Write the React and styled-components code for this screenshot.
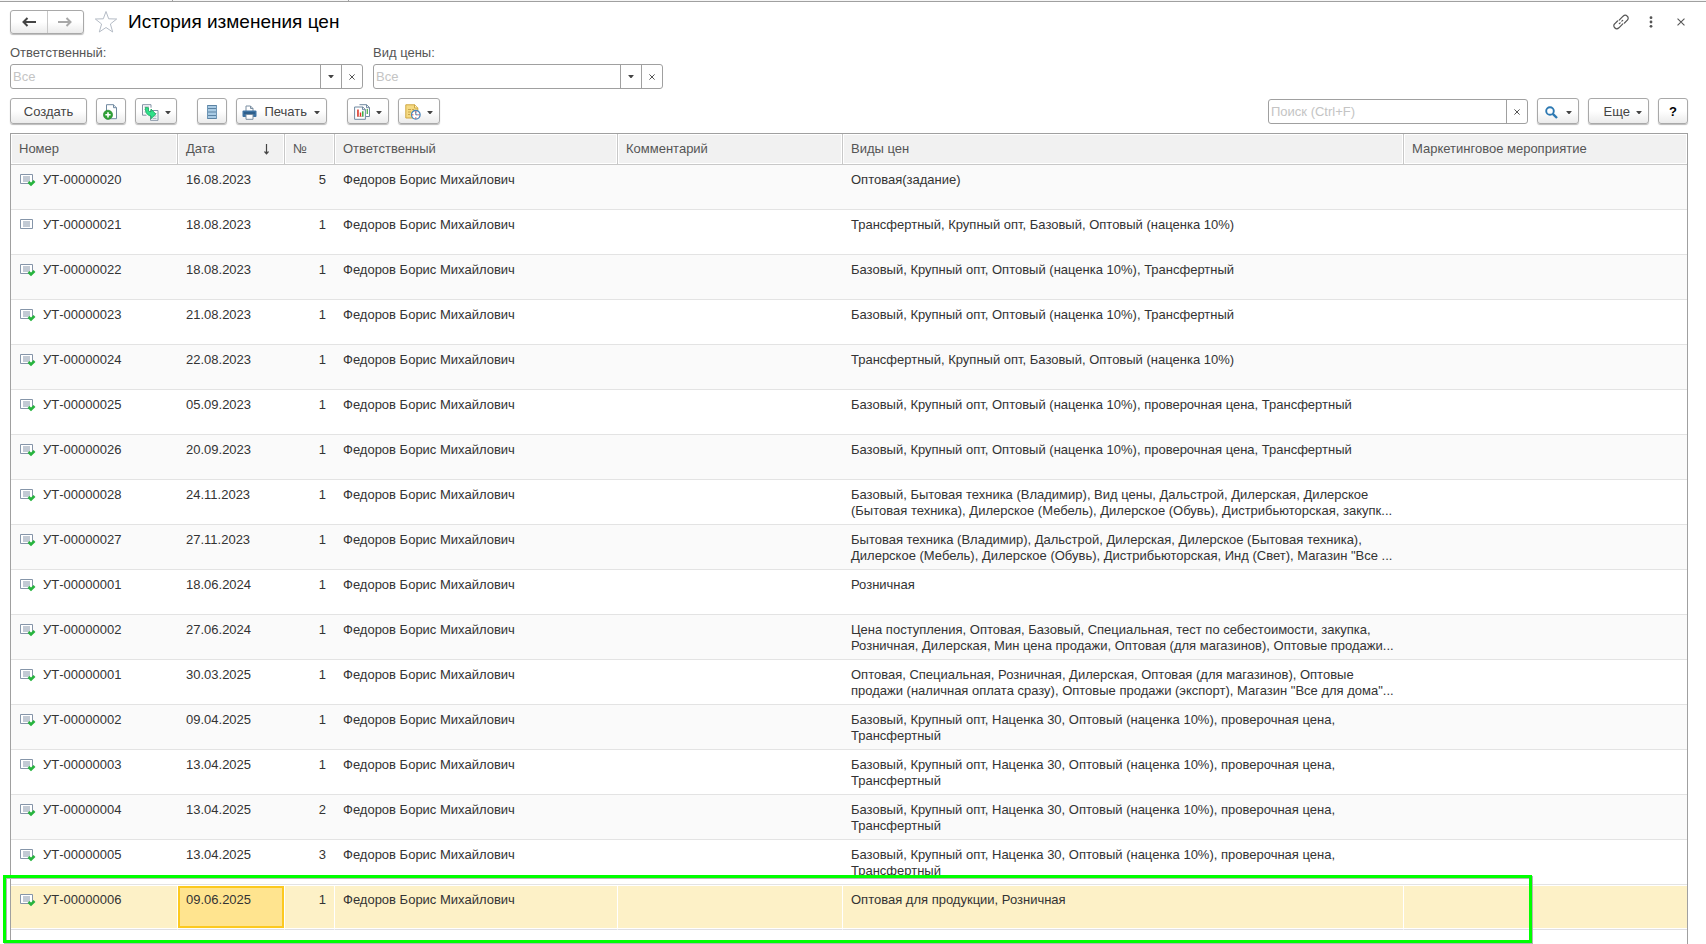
import React from "react";
import styled, { createGlobalStyle, css } from "styled-components";

const GlobalStyle = createGlobalStyle`
  *, *::before, *::after { box-sizing: border-box; }
  body {
    margin: 0;
    background: #fff;
    color: #333;
    font: 13px/16px "Liberation Sans", Arial, sans-serif;
  }
  button, input { font: inherit; color: inherit; }
`;

const Page = styled.div`
  display: flex;
  flex-direction: column;
  height: 100vh;
  overflow: hidden;
`;

const TabStrip = styled.div`
  display: flex;
  flex: none;
  height: 2px;
  background: #f6f6f6;
  border-bottom: 1px solid #a0a0a0;
`;

const TabEdge = styled.div`
  width: ${(p) => p.$width}px;
  border-right: 1px solid #a0a0a0;
`;

const Content = styled.main`
  display: flex;
  flex: 1;
  flex-direction: column;
  min-height: 0;
  padding: 8px 18px 0 10px;
`;

const TitleBar = styled.header`
  display: flex;
  align-items: center;
  height: 24px;
  margin-right: -8px;
`;

const raised = css`
  border: 1px solid #a9a9a9;
  border-radius: 3px;
  background: linear-gradient(#fff 50%, #ebebeb);
  box-shadow: 0 1px 1px #bbb;
`;

const NavGroup = styled.nav`
  ${raised}
  display: flex;
  width: 74px;
  height: 24px;
`;

const NavButton = styled.button`
  display: flex;
  flex: 1;
  align-items: center;
  justify-content: center;
  padding: 0;
  border: 0;
  background: none;
  color: ${(p) => (p.disabled ? "#a8a8a8" : "#444")};
  & + & { border-left: 1px solid #c8c8c8; }
`;

const PlainButton = styled.button`
  display: flex;
  align-items: center;
  justify-content: center;
  width: ${(p) => p.$width || 30}px;
  height: 24px;
  padding: 0;
  border: 0;
  background: none;
  color: #555;
`;

const Title = styled.h1`
  flex: 1;
  margin: 0;
  color: #000;
  font-size: 19px;
  font-weight: 400;
  line-height: 24px;
`;

const Filters = styled.div`
  display: flex;
  gap: 10px;
  margin-top: 11px;
`;

const Filter = styled.div`
  width: ${(p) => p.$width}px;
`;

const Label = styled.label`
  display: block;
  margin-bottom: 3px;
  color: #555;
`;

const Field = styled.div`
  display: flex;
  width: ${(p) => (p.$width ? p.$width + "px" : "100%")};
  height: 25px;
  border: 1px solid #a0a0a0;
  border-radius: 3px;
  background: #fff;
`;

const Input = styled.input`
  flex: 1;
  min-width: 0;
  padding: 0 2px;
  border: 0;
  outline: 0;
  background: none;
  &::placeholder { color: #c4c4c4; opacity: 1; }
`;

const FieldButton = styled.button`
  display: flex;
  align-items: center;
  justify-content: center;
  width: 21px;
  padding: 0;
  border: 0;
  border-left: 1px solid #a0a0a0;
  background: none;
  color: #444;
`;

const Toolbar = styled.div`
  display: flex;
  align-items: flex-end;
  gap: 9px;
  height: 26px;
  margin-top: 9px;
`;

const Group = styled.div`
  display: flex;
  gap: 9px;
  margin-right: ${(p) => (p.$last ? "auto" : "11px")};
`;

const Button = styled.button`
  ${raised}
  display: flex;
  align-items: center;
  justify-content: ${(p) => (p.$end ? "flex-end" : "center")};
  gap: ${(p) => p.$gap || 6}px;
  width: ${(p) => p.$width}px;
  height: 26px;
  padding: ${(p) => (p.$end ? "2px 6px 0 0" : "2px 0 0")};
  color: #444;
`;

const HelpButton = styled(Button)`
  color: #000;
  font-weight: 700;
`;

const TableFrame = styled.div`
  flex: 1;
  min-height: 0;
  margin-top: 9px;
  border: solid #a0a0a0;
  border-width: 1px 1px 0;
`;

const Table = styled.table`
  width: 100%;
  table-layout: fixed;
  border-collapse: separate;
  border-spacing: 0;
`;

const Col = styled.col`
  width: ${(p) => (p.$width ? p.$width + "px" : "auto")};
`;

const HeadCell = styled.th`
  height: 31px;
  padding: 0 8px;
  border-right: 1px solid #c8c8c8;
  border-bottom: 1px solid #c8c8c8;
  background: #f1f1f1;
  box-shadow: inset 0 0 0 1px #fff;
  color: #555;
  font-weight: 400;
  text-align: left;
  white-space: nowrap;
  &:last-child { border-right: 0; }
`;

const HeadContent = styled.div`
  display: flex;
  align-items: center;
  justify-content: space-between;
  padding-right: 6px;
`;

const Cell = styled.td`
  height: 45px;
  padding: 7px ${(p) => (p.$right ? 9 : 8)}px 5px 8px;
  border-bottom: 1px solid #e3e3e3;
  text-align: ${(p) => (p.$right ? "right" : "left")};
  vertical-align: top;
  white-space: nowrap;
`;

const PriceCell = styled(Cell)`
  white-space: pre-line;
`;

const Row = styled.tr`
  background: ${(p) => (p.$even ? "#fafafa" : "#fff")};
  ${(p) =>
    p.$selected &&
    css`
      position: relative;
      background: #fdf1c7;
      ${Cell} {
        border-right: 1px solid #fff;
        box-shadow: inset 0 1px #fff, inset 0 -1px #fff;
        border-bottom-color: #dfdfe3;
      }
      ${Cell}:nth-of-type(3) { padding-right: 8px; }
      ${Cell}:last-of-type { border-right: 0; }
      ${Cell}:nth-of-type(2) {
        background: #ffe48f;
        box-shadow: inset 0 1px #fff, inset 0 -1px #fff, inset 2px 0 #fcc920,
          inset -2px 0 #fcc920, inset 0 3px #fcc920, inset 0 -3px #fcc920;
      }
    `}
`;

const NumberContent = styled.div`
  display: flex;
  gap: 7px;
`;

const Highlight = styled.div`
  position: absolute;
  top: -10px;
  right: 155px;
  left: -8px;
  height: 68px;
  border: 3px solid #00ff00;
  box-shadow: 1px 1px #b4b4b4, inset 1px 1px #b4b4b4;
  pointer-events: none;
`;

const Caret = () => (
  <svg width="6" height="3" viewBox="0 0 6 3" aria-hidden="true">
    <path d="M.5 0h5v.6L3.500 3h-1L.5.6z" fill="#444" />
  </svg>
);

const Cross = ({ size = 6 }) => (
  <svg width={size} height={size} viewBox="0 0 6 6" aria-hidden="true">
    <path d="M.4.4l5.200 5.200M5.600.4L.4 5.600" fill="none" stroke="#555" strokeWidth={size > 6 ? 0.8 : 1} />
  </svg>
);

const Arrow = ({ flip }) => (
  <svg width="14" height="10" viewBox="0 0 14 10" aria-hidden="true">
    <g transform={flip ? "matrix(-1 0 0 1 14 0)" : undefined} fill="none" stroke="currentColor" strokeWidth="2">
      <path d="M1.500 5H14" />
      <path d="M5.500 1L1.500 5l4 4" />
    </g>
  </svg>
);

const Star = () => (
  <svg width="24" height="24" viewBox="0 0 24 24" aria-hidden="true">
    <path d="M12 1.500l2.700 7.300 8 .2-6.300 5 2.300 8L12 17.500 5.300 22l2.300-8-6.300-5 8-.2z" fill="#fff" stroke="#b5bcc6" />
  </svg>
);

const LinkIcon = () => (
  <svg width="16" height="16" viewBox="0 0 16 16" fill="none" stroke="#555" strokeWidth="1.200" strokeLinecap="round" aria-hidden="true">
    <path d="M6.200 6.200l3.900-4a3 3 0 0 1 4.200 0 2.700 2.700 0 0 1 0 4L11.500 9" />
    <path d="M9.800 9.800l-3.900 4a3 3 0 0 1-4.200 0 2.700 2.700 0 0 1 0-4L4.500 7" />
    <path d="M6.300 9.700l.9-.9M8.800 7.200l.9-.9" />
  </svg>
);

const Dots = () => (
  <svg width="4" height="12" viewBox="0 0 4 12" fill="#555" aria-hidden="true">
    <circle cx="2" cy="1.700" r="1.400" />
    <circle cx="2" cy="6" r="1.400" />
    <circle cx="2" cy="10.300" r="1.400" />
  </svg>
);

const AddDocIcon = () => (
  <svg width="16" height="16" viewBox="0 0 16 16" aria-hidden="true">
    <path d="M3.500.7h7l3 3v11h-10z" fill="#fff" stroke="#7089a0" />
    <path d="M10.500.7v3h3" fill="#dfe7ee" stroke="#7089a0" />
    <circle cx="5" cy="10.800" r="4.600" fill="#2fa236" stroke="#1c8427" strokeWidth=".6" />
    <path d="M5 8.200v5.200M2.400 10.800h5.200" stroke="#fff" strokeWidth="1.600" />
  </svg>
);

const CopyIcon = () => (
  <svg width="17" height="17" viewBox="0 0 17 17" aria-hidden="true">
    <path d="M.5.7h8.500v3M.5.7v10.500h4" fill="none" stroke="#8292a4" />
    <path d="M2.500 3h4.500M2.500 5.500h1.500M2.500 8h1.500" stroke="#9aa8b6" />
    <path d="M8.500 6.500h7.500v9.800H8.500z" fill="#fff" stroke="#8292a4" />
    <path d="M12.500 9.500h2M11 12h3.500M10.500 14.300h4" stroke="#9aa8b6" />
    <path d="M3.300 3.500l3.200.3v3.400l2.500.6V5l4.800 5L9 14.800V12C5.500 11.500 3.300 9 3.300 3.500z" fill="#2fe08a" stroke="#18a45c" strokeWidth=".8" />
  </svg>
);

const ListIcon = () => (
  <svg width="12" height="16" viewBox="0 0 12 16" aria-hidden="true">
    <path d="M1 1h10v14H1z" fill="#a9cbe4" />
    <path d="M1 1.500h10M1 4.500h10M1 8h10M1 11.500h10M1 14.500h10" stroke="#5c83a3" />
    <path d="M1.500 1v14M10.500 1v14" stroke="#6f96b5" />
  </svg>
);

const PrinterIcon = () => (
  <svg width="15" height="15" viewBox="0 0 15 15" aria-hidden="true">
    <path d="M4 6V1h4.500L11 3.500V6" fill="#fff" stroke="#7a8ea1" />
    <path d="M8.500 1v2.500H11" fill="none" stroke="#7a8ea1" />
    <rect x=".5" y="5.500" width="14" height="6.500" rx="1" fill="#3d72a2" />
    <path d="M2 8h11" stroke="#204c75" />
    <path d="M4 9.500h7v4.800H4z" fill="#fff" stroke="#7a8ea1" />
  </svg>
);

const ReportIcon = () => (
  <svg width="16" height="16" viewBox="0 0 16 16" aria-hidden="true">
    <path d="M5.500.7h7l3 2.800v9H12" fill="#fff" stroke="#7089a0" />
    <path d="M12.500.7v3h3" fill="none" stroke="#7089a0" />
    <path d="M13.300 5v5" stroke="#53b653" strokeWidth="1.300" />
    <path d="M.6 3h8.200l2.600 2.500v9.800H.6z" fill="#fff" stroke="#7089a0" />
    <path d="M8.500 3v2.700h3" fill="none" stroke="#7089a0" />
    <path d="M3.500 6v6.500M3 12.500h6.500" stroke="#b9a8a8" strokeWidth=".7" />
    <path d="M4 5.500v7" stroke="#e03325" strokeWidth="1.500" />
    <path d="M6.500 8.500v4" stroke="#e03325" strokeWidth="1.400" />
    <path d="M8.800 7.200v5.300" stroke="#2da83a" strokeWidth="1.400" />
  </svg>
);

const ScheduleIcon = () => (
  <svg width="16" height="16" viewBox="0 0 16 16" aria-hidden="true">
    <path d="M.8.8h9l3 3V14h-12z" fill="#f5da83" stroke="#cfa843" />
    <path d="M9.500.8V4h3.300" fill="#fff2c2" stroke="#cfa843" />
    <path d="M3 5.500h3M7 5.500h2M3 8h3M3 10.500h2" stroke="#caa64d" />
    <circle cx="10.800" cy="10.800" r="4.300" fill="#fff" stroke="#4a87bd" strokeWidth="1.300" />
    <path d="M10.800 10.800V8M10.800 10.800h2" stroke="#4776a4" />
    <path d="M10.800 7.200v1.200M10.800 13.300v1.200M7.200 10.800h1.200M13.300 10.800h1.200" stroke="#d32f2f" />
  </svg>
);

const SearchIcon = () => (
  <svg width="13" height="13" viewBox="0 0 13 13" aria-hidden="true">
    <circle cx="5" cy="5" r="3.800" fill="none" stroke="#2d79b2" strokeWidth="1.900" />
    <path d="M7.800 7.800L12 12" stroke="#2d79b2" strokeWidth="2.400" />
  </svg>
);

const DocIcon = ({ posted }) => (
  <svg width="17" height="16" viewBox="0 0 17 16" aria-hidden="true">
    <path d="M1.500 2.500h12v9h-12z" fill="#fff" stroke="#8595a9" />
    <path d="M4 5h7M4 7h7M4 9h7" stroke="#8595a9" />
    {posted && (
      <path d="M9.500 10l2.500 2.500L15.500 9" fill="none" stroke="#27b43e" strokeWidth="2.600" />
    )}
  </svg>
);

const SortArrow = () => (
  <svg width="7" height="11" viewBox="0 0 7 11" aria-hidden="true">
    <path d="M3.500 0v10M1.500 7.500l2 2.300 2-2.300" fill="none" stroke="#444" strokeWidth="1.200" />
  </svg>
);

const WIDTHS = [167, 107, 50, 283, 225, 561, 0];
const PERSON = "Федоров Борис Михайлович";
const BASE = "Базовый, Крупный опт, Оптовый (наценка 10%), Трансфертный";
const CHECKED = "Базовый, Крупный опт, Оптовый (наценка 10%), проверочная цена, Трансфертный";
const TRANSFER = "Трансфертный, Крупный опт, Базовый, Оптовый (наценка 10%)";
const MARKUP = "Базовый, Крупный опт, Наценка 30, Оптовый (наценка 10%), проверочная цена,\nТрансфертный";

const ROWS = [
  ["20", "16.08.2023", 5, "Оптовая(задание)"],
  ["21", "18.08.2023", 1, TRANSFER],
  ["22", "18.08.2023", 1, BASE],
  ["23", "21.08.2023", 1, BASE],
  ["24", "22.08.2023", 1, TRANSFER],
  ["25", "05.09.2023", 1, CHECKED],
  ["26", "20.09.2023", 1, CHECKED],
  ["28", "24.11.2023", 1, "Базовый, Бытовая техника (Владимир), Вид цены, Дальстрой, Дилерская, Дилерское\n(Бытовая техника), Дилерское (Мебель), Дилерское (Обувь), Дистрибьюторская, закупк..."],
  ["27", "27.11.2023", 1, "Бытовая техника (Владимир), Дальстрой, Дилерская, Дилерское (Бытовая техника),\nДилерское (Мебель), Дилерское (Обувь), Дистрибьюторская, Инд (Свет), Магазин \"Все ..."],
  ["01", "18.06.2024", 1, "Розничная"],
  ["02", "27.06.2024", 1, "Цена поступления, Оптовая, Базовый, Специальная, тест по себестоимости, закупка,\nРозничная, Дилерская, Мин цена продажи, Оптовая (для магазинов), Оптовые продажи..."],
  ["01", "30.03.2025", 1, "Оптовая, Специальная, Розничная, Дилерская, Оптовая (для магазинов), Оптовые\nпродажи (наличная оплата сразу), Оптовые продажи (экспорт), Магазин \"Все для дома\"..."],
  ["02", "09.04.2025", 1, MARKUP],
  ["03", "13.04.2025", 1, MARKUP],
  ["04", "13.04.2025", 2, MARKUP],
  ["05", "13.04.2025", 3, MARKUP],
  ["06", "09.06.2025", 1, "Оптовая для продукции, Розничная"],
];

function FilterBox({ id, label, width }) {
  return (
    <Filter $width={width}>
      <Label htmlFor={id}>{label}</Label>
      <Field>
        <Input id={id} placeholder="Все" />
        <FieldButton aria-label="Выбрать"><Caret /></FieldButton>
        <FieldButton aria-label="Очистить"><Cross /></FieldButton>
      </Field>
    </Filter>
  );
}

export default function App() {
  return (
    <Page>
      <GlobalStyle />
      <TabStrip>
        <TabEdge $width={173} />
        <TabEdge $width={176} />
      </TabStrip>
      <Content>
        <TitleBar>
          <NavGroup>
            <NavButton aria-label="Назад"><Arrow /></NavButton>
            <NavButton aria-label="Вперед" disabled><Arrow flip /></NavButton>
          </NavGroup>
          <PlainButton $width={44} aria-label="В избранное"><Star /></PlainButton>
          <Title>История изменения цен</Title>
          <PlainButton aria-label="Ссылка"><LinkIcon /></PlainButton>
          <PlainButton aria-label="Меню"><Dots /></PlainButton>
          <PlainButton aria-label="Закрыть"><Cross size={8} /></PlainButton>
        </TitleBar>

        <Filters>
          <FilterBox id="responsible" label="Ответственный:" width={353} />
          <FilterBox id="price-type" label="Вид цены:" width={290} />
        </Filters>

        <Toolbar>
          <Group>
            <Button $width={77}>Создать</Button>
            <Button $width={30} aria-label="Добавить"><AddDocIcon /></Button>
            <Button $width={42} aria-label="Создать на основании"><CopyIcon /><Caret /></Button>
          </Group>
          <Group>
            <Button $width={30} aria-label="Список"><ListIcon /></Button>
            <Button $width={91} $gap={7} $end><PrinterIcon />Печать<Caret /></Button>
          </Group>
          <Group $last>
            <Button $width={42} aria-label="Отчеты"><ReportIcon /><Caret /></Button>
            <Button $width={42} aria-label="Расписание"><ScheduleIcon /><Caret /></Button>
          </Group>
          <Field $width={260}>
            <Input aria-label="Поиск" placeholder="Поиск (Ctrl+F)" />
            <FieldButton aria-label="Очистить"><Cross /></FieldButton>
          </Field>
          <Button $width={42} $gap={8} aria-label="Найти"><SearchIcon /><Caret /></Button>
          <Button $width={61} $end>Еще<Caret /></Button>
          <HelpButton $width={30}>?</HelpButton>
        </Toolbar>

        <TableFrame>
          <Table>
            <colgroup>
              {WIDTHS.map((w, i) => <Col key={i} $width={w} />)}
            </colgroup>
            <thead>
              <tr>
                <HeadCell>Номер</HeadCell>
                <HeadCell><HeadContent>Дата<SortArrow /></HeadContent></HeadCell>
                <HeadCell>№</HeadCell>
                <HeadCell>Ответственный</HeadCell>
                <HeadCell>Комментарий</HeadCell>
                <HeadCell>Виды цен</HeadCell>
                <HeadCell>Маркетинговое мероприятие</HeadCell>
              </tr>
            </thead>
            <tbody>
              {ROWS.map(([number, date, line, prices], i) => {
                const selected = i === ROWS.length - 1;
                return (
                  <Row key={i} $even={i % 2 === 0} $selected={selected}>
                    <Cell>
                      <NumberContent>
                        <DocIcon posted={i !== 1} />
                        УТ-000000{number}
                      </NumberContent>
                    </Cell>
                    <Cell>{date}</Cell>
                    <Cell $right>{line}</Cell>
                    <Cell>{PERSON}</Cell>
                    <Cell />
                    <PriceCell>{prices}</PriceCell>
                    <Cell>{selected && <Highlight />}</Cell>
                  </Row>
                );
              })}
            </tbody>
          </Table>
        </TableFrame>
      </Content>
    </Page>
  );
}
